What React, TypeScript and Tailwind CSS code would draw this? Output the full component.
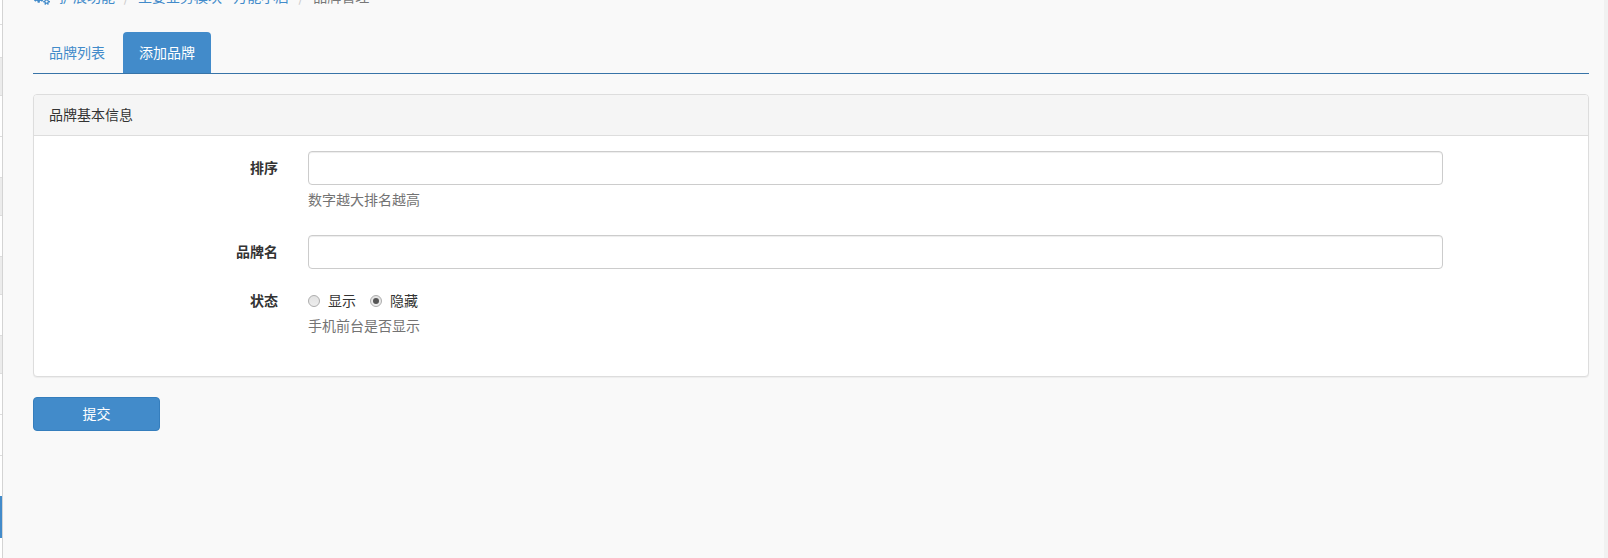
import type { ReactNode } from "react";

const railRows = [
  "h-[25px] border-b border-[#ddd] bg-white",
  "h-[33px] border-b border-[#ddd] bg-white",
  "h-[38px] border-b border-[#ddd] bg-[#ececec]",
  "h-[41px] border-b border-[#ddd] bg-white",
  "h-[41px] border-b border-[#ddd] bg-white",
  "h-[38px] border-b border-[#ddd] bg-[#ececec]",
  "h-[41px] border-b border-[#ddd] bg-white",
  "h-[38px] border-b border-[#ddd] bg-[#ececec]",
  "h-[41px] border-b border-[#ddd] bg-white",
  "h-[38px] border-b border-[#ddd] bg-[#ececec]",
  "h-[41px] border-b border-[#ddd] bg-white",
  "h-[41px] border-b border-[#ddd] bg-white",
  "h-[40px] bg-white",
  "h-[42px] bg-[#428bca]",
  "h-[20px] bg-white",
];

function CogsIcon() {
  return (
    <svg className="mt-px shrink-0" width="17" height="16" viewBox="0 0 1920 1792" fill="#428bca">
      <path d="M896 896q0-106-75-181t-181-75-181 75-75 181 75 181 181 75 181-75 75-181zm768 512q0-52-38-90t-90-38-90 38-38 90q0 53 37.500 90.500t90.500 37.500 90.500-37.500 37.500-90.500zm0-1024q0-52-38-90t-90-38-90 38-38 90q0 53 37.500 90.500t90.500 37.500 90.500-37.500 37.500-90.500zm-384 421v185q0 10-7 19.500t-16 10.500l-155 24q-11 35-32 76 34 48 90 115 7 10 7 20 0 12-7 19-23 30-82.500 89.500t-78.500 59.500q-11 0-21-7l-115-90q-37 19-77 31-11 108-23 155-7 24-30 24h-186q-11 0-20-7.500t-10-17.500l-23-153q-34-10-75-31l-118 89q-7 7-20 7-11 0-21-8-144-133-144-160 0-9 7-19 10-14 41-53t47-61q-23-44-35-82l-152-24q-10-1-17-9.500t-7-19.500v-185q0-10 7-19.500t16-10.500l155-24q11-35 32-76-34-48-90-115-7-11-7-20 0-12 7-20 22-30 82-89t79-59q11 0 21 7l115 90q34-18 77-32 11-108 23-154 7-24 30-24h186q11 0 20 7.500t10 17.500l23 153q34 10 75 31l118-89q8-7 20-7 11 0 21 8 144 133 144 160 0 9-7 19-12 16-42 54t-45 60q23 48 34 82l152 23q10 2 17 10.500t7 19.500zm640 533v140q0 16-149 31-12 27-30 52 51 113 51 138 0 4-4 7-122 71-124 71-8 0-46-47t-52-68q-20 2-30 2t-30-2q-14 21-52 68t-46 47q-2 0-124-71-4-3-4-7 0-25 51-138-18-25-30-52-149-15-149-31v-140q0-16 149-31 13-29 30-52-51-113-51-138 0-4 4-7 4-2 35-20t59-34 30-16q8 0 46 46.500t52 67.500q20-2 30-2t30 2q51-71 92-112l6-2q4 0 124 70 4 3 4 7 0 25-51 138 17 23 30 52 149 15 149 31zm0-1024v140q0 16-149 31-12 27-30 52 51 113 51 138 0 4-4 7-122 71-124 71-8 0-46-47t-52-68q-20 2-30 2t-30-2q-14 21-52 68t-46 47q-2 0-124-71-4-3-4-7 0-25 51-138-18-25-30-52-149-15-149-31v-140q0-16 149-31 13-29 30-52-51-113-51-138 0-4 4-7 4-2 35-20t59-34 30-16q8 0 46 46.500t52 67.500q20-2 30-2t30 2q51-71 92-112l6-2q4 0 124 70 4 3 4 7 0 25-51 138 17 23 30 52 149 15 149 31z" />
    </svg>
  );
}

function Field({ label, children }: { label: string; children: ReactNode }) {
  return (
    <div className="flex">
      <div className="w-[244px] shrink-0 pt-1.5 text-right font-bold">{label}</div>
      <div className="ml-[30px] w-[1135px]">{children}</div>
    </div>
  );
}

const inputClass =
  "block h-[34px] w-full rounded border border-[#ccc] bg-white px-3 shadow-[inset_0_1px_1px_rgba(0,0,0,0.075)] outline-none";

function Radio({ checked }: { checked?: boolean }) {
  return (
    <span className="mt-px flex size-3 items-center justify-center rounded-full border border-[#adadad] bg-linear-to-b from-[#e2e2e2] to-[#eee]">
      {checked && <span className="size-1.5 rounded-full bg-[#555]" />}
    </span>
  );
}

export default function App() {
  return (
    <div className="flex h-[558px] w-full overflow-hidden bg-[#f9f9f9] font-['Noto_Sans_CJK_SC',sans-serif] text-sm leading-5 text-[#333]">
      <aside className="flex w-[3px] shrink-0 flex-col border-r border-[#d4d4d4]">
        {railRows.map((row, i) => (
          <div key={i} className={`shrink-0 ${row}`} />
        ))}
      </aside>
      <main className="min-w-0 flex-1 pr-[15px] pl-[30px]">
        <nav className="-mt-[14px] flex h-5 items-center whitespace-nowrap text-[#428bca]">
          <CogsIcon />
          <a className="ml-[9px]">扩展功能</a>
          <span className="w-[23px] text-center text-[#ccc]">/</span>
          <a>主要业务模块 - 万能小店</a>
          <span className="w-6 text-center text-[#ccc]">/</span>
          <span className="text-[#777]">品牌管理</span>
        </nav>
        <div className="mt-[26px] flex h-[42px] border-b border-[#3874a8]">
          <a className="mr-0.5 px-4 py-2.5 text-[#428bca]">品牌列表</a>
          <a className="h-[41px] rounded-t bg-[#428bca] px-4 py-2.5 text-white">添加品牌</a>
        </div>
        <section className="mt-5 h-[283px] rounded border border-[#ddd] bg-white shadow-[0_1px_1px_rgba(0,0,0,0.05)]">
          <h3 className="h-[41px] rounded-t-[3px] border-b border-[#ddd] bg-[#f5f5f5] px-[15px] py-[9px]">品牌基本信息</h3>
          <div className="pt-[15px]">
            <Field label="排序">
              <input className={inputClass} />
              <p className="mt-1 text-[#737373]">数字越大排名越高</p>
            </Field>
            <div className="mt-[26px]">
              <Field label="品牌名">
                <input className={inputClass} />
              </Field>
            </div>
            <div className="mt-[15px]">
              <Field label="状态">
                <div className="flex items-center pt-1.5">
                  <Radio />
                  <span className="ml-2">显示</span>
                  <span className="ml-[14px]">
                    <Radio checked />
                  </span>
                  <span className="ml-2">隐藏</span>
                </div>
                <p className="mt-[5px] text-[#737373]">手机前台是否显示</p>
              </Field>
            </div>
          </div>
        </section>
        <button className="mt-5 flex h-[34px] w-[127px] items-center justify-center rounded border border-[#357ebd] bg-[#428bca] pb-0.5 text-white">
          提交
        </button>
      </main>
      <div className="w-1 shrink-0 bg-[#f1f1f1]" />
    </div>
  );
}
